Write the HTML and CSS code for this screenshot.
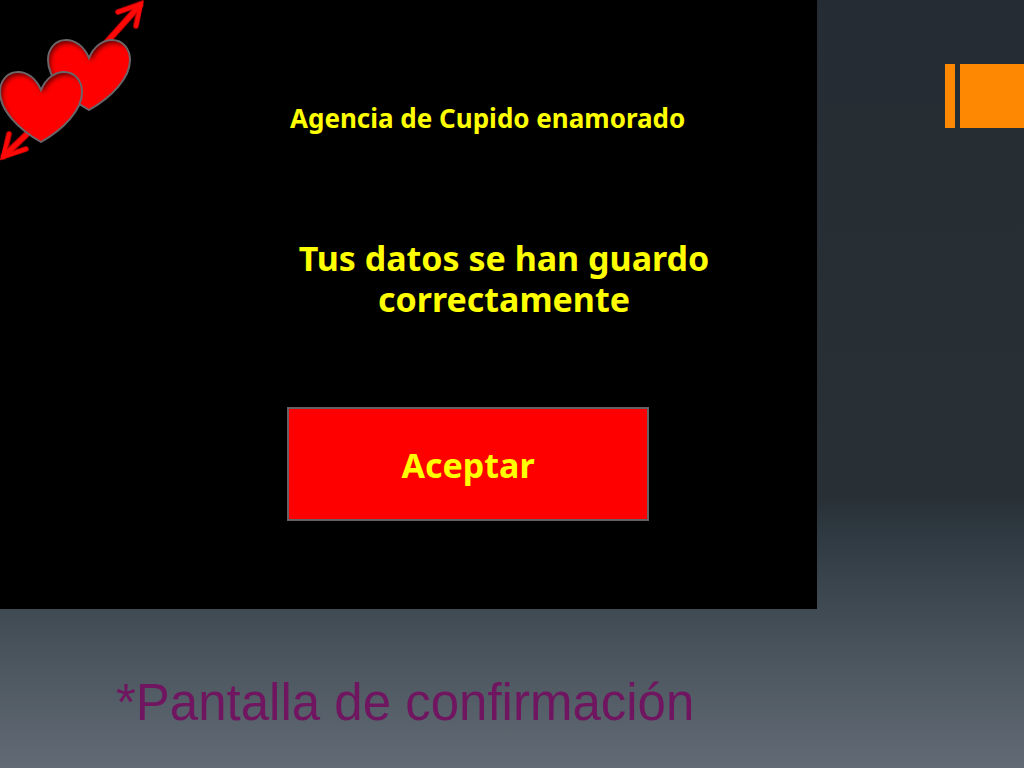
FILE: index.html
```html
<!DOCTYPE html>
<html lang="es">
<head>
    <meta charset="UTF-8">
    <meta name="viewport" content="width=device-width, initial-scale=1.0">
    <title>Agencia de Cupido enamorado</title>
    <link rel="stylesheet" href="styles.css">
</head>
<body>
    <div class="top">
        <main class="screen">
            <svg class="logo" width="150" height="165" viewBox="0 0 150 165" aria-hidden="true">
                <defs>
                    <path id="heart" d="M41 20 C46 8 55 2 64 2 C75 2 82 11 82 22 C82 40 64 59 41 72 C18 59 0 40 0 22 C0 11 7 2 18 2 C27 2 36 8 41 20 Z"/>
                    <clipPath id="inside"><use href="#heart"/></clipPath>
                    <filter id="soft" x="-20%" y="-20%" width="140%" height="140%"><feGaussianBlur stdDeviation="2.5"/></filter>
                    <filter id="edge" x="-20%" y="-20%" width="140%" height="140%"><feGaussianBlur stdDeviation="0.5"/></filter>
                    <g id="shaded">
                        <use href="#heart" fill="#ff0000"/>
                        <g clip-path="url(#inside)">
                            <path d="M-20 -20 H110 V110 H-20 Z M43 23 C48 11 57 5 66 5 C79 5 88 14 88 25 C88 45 66 66 43 79 C20 64 2 43 2 25 C2 14 9 5 20 5 C29 5 38 11 43 23 Z" fill="#600000" fill-rule="evenodd" filter="url(#soft)"/>
                        </g>
                        <use href="#heart" fill="none" stroke="#6b6468" stroke-width="2"/>
                    </g>
                </defs>
                <g fill="none" stroke-linecap="round">
                    <g stroke="#a00000" filter="url(#edge)">
                        <path d="M140 5 L106 43 M4 156 L27 134" stroke-width="7"/>
                        <path d="M118 12 L140 4 L136 26 M9 134 L4 156 L26 149" stroke-width="6"/>
                    </g>
                    <path d="M140 5 L106 43 M4 156 L27 134" stroke="#ff0808" stroke-width="5"/>
                    <path d="M118 12 L141 4 L136 26 M9 134 L3 157 L26 149" stroke="#ff0808" stroke-width="4"/>
                </g>
                <use href="#shaded" x="48" y="38"/>
                <use href="#shaded" x="0" y="70"/>
            </svg>
            <h1>Agencia de Cupido enamorado</h1>
            <p class="message">Tus datos se han guardo correctamente</p>
            <button type="button" class="accept">Aceptar</button>
        </main>
        <div class="tab">
            <span class="tab-line"></span>
            <span class="tab-block"></span>
        </div>
    </div>
    <h2 class="caption">*Pantalla de confirmación</h2>
</body>
</html>
```

FILE: styles.css
```css
* {
    box-sizing: border-box;
}

body {
    margin: 0;
    min-height: 100vh;
    background: linear-gradient(#252c33 0%, #282f35 64%, #2f3a42 70%, #3b464e 77%, #4d5760 87%, #626b75 100%);
    font-family: "Noto Sans", "Open Sans", sans-serif;
}

.top {
    display: flex;
}

.screen {
    position: relative;
    flex: 1;
    padding: 100px 96px 88px 287px;
    background: #000;
    color: #ffff00;
}

/* hearts in the corner, over the screen */
.logo {
    position: absolute;
    top: 0;
    left: 0;
}

h1 {
    margin: 0 0 102px 3px;
    font-size: 26px;
    line-height: 36px;
}

.message {
    max-width: 434px;
    margin: 0 0 87px;
    font-size: 34px;
    font-weight: bold;
    line-height: 41px;
    text-align: center;
}

.accept {
    display: block;
    width: 362px;
    padding: 37px 20px 35px;
    border: 2px solid #666066;
    background: #ff0000;
    color: #ffff00;
    font-family: inherit;
    font-size: 34px;
    font-weight: bold;
    line-height: 38px;
    cursor: pointer;
}

.tab {
    display: flex;
    gap: 5px;
    height: 64px;
    margin: 64px 0 0 128px;
}

.tab-line {
    width: 10px;
    background: #ff8803;
}

.tab-block {
    width: 64px;
    background: #ff8803;
}

.caption {
    margin: 0;
    padding: 64px 116px 35px;
    color: #701560;
    font-family: "Liberation Sans", Arial, sans-serif;
    font-size: 51px;
    font-weight: normal;
    line-height: 60px;
}
```
